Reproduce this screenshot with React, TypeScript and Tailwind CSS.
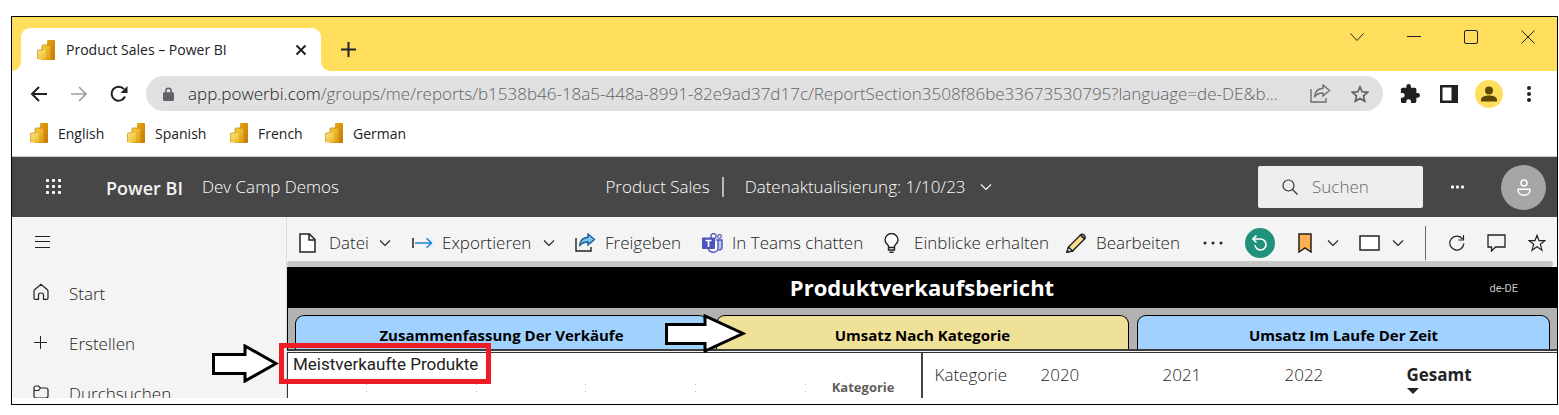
import type { ReactNode } from 'react';

const sans = "font-['Open_Sans','Noto_Sans',sans-serif]";

function PowerBiIcon() {
  return (
    <svg width="18" height="20" viewBox="0 0 18 20" className="shrink-0" aria-hidden="true">
      <defs>
        <linearGradient id="barBack" x1="0" y1="0" x2="1" y2="1">
          <stop offset="0" stopColor="#e8a812" />
          <stop offset="1" stopColor="#c87508" />
        </linearGradient>
        <linearGradient id="barMid" x1="0" y1="0" x2="1" y2="1">
          <stop offset="0" stopColor="#f5d040" />
          <stop offset="1" stopColor="#dc980e" />
        </linearGradient>
        <linearGradient id="barFront" x1="0" y1="0" x2="1" y2="1">
          <stop offset="0" stopColor="#fae580" />
          <stop offset="1" stopColor="#eab828" />
        </linearGradient>
      </defs>
      <rect x="10" y="0" width="8" height="20" rx="1" fill="url(#barBack)" />
      <path d="M5 6a1 1 0 0 1 1-1h7a1 1 0 0 1 1 1v14H5z" fill="url(#barMid)" stroke="#c8860c" strokeWidth=".8" />
      <path d="M.4 11a1 1 0 0 1 1-1H8a1 1 0 0 1 1 1v8.600H1.400a1 1 0 0 1-1-1z" fill="url(#barFront)" />
      <path d="M.4 19V11a1 1 0 0 1 1-1H5" fill="none" stroke="#d08c14" strokeWidth=".8" />
    </svg>
  );
}

function Line({ w, h, box, sw = 1, children, className = '' }: { w: number; h: number; box?: string; sw?: number; children: ReactNode; className?: string }) {
  return (
    <svg width={w} height={h} viewBox={box ?? `0 0 ${w} ${h}`} fill="none" stroke="currentColor" strokeWidth={sw} className={`shrink-0 ${className}`} aria-hidden="true">
      {children}
    </svg>
  );
}

function Chevron({ className = '' }: { className?: string }) {
  return (
    <Line w={12} h={8} sw={1.100} className={className}>
      <path d="M1 1.500l5 5 5-5" />
    </Line>
  );
}

function ShareIcon({ blue = false }: { blue?: boolean }) {
  return (
    <Line w={21} h={19} sw={1.4}>
      <path d="M1 5v13h15v-4" />
      <path
        d="M13 1l6.500 5.500L13 12V9C9 9 6.500 10 4.500 13 5 7.500 8 4.500 13 4.200z"
        fill={blue ? '#7cc0ee' : 'none'}
        stroke={blue ? '#1c5f94' : 'currentColor'}
      />
    </Line>
  );
}

function BrowserTabs() {
  return (
    <div className="flex h-[54px] items-end bg-[#ffde5e]">
      <svg width="9" height="9" viewBox="0 0 9 9" aria-hidden="true">
        <path d="M9 0v9H0A9 9 0 0 0 9 0z" fill="#fff" />
      </svg>
      <div className="flex h-[43px] w-[300px] items-center rounded-t-[9px] bg-white pl-4 pr-[14px]">
        <PowerBiIcon />
        <span className="ml-[11px] flex-1 whitespace-nowrap text-[14px] text-[#202124]">Product Sales – Power BI</span>
        <button aria-label="Close tab">
          <Line w={12} h={12} sw={2} className="text-[#202124]">
            <path d="M1.500 1.500l9 9M10.500 1.500l-9 9" />
          </Line>
        </button>
      </div>
      <svg width="9" height="9" viewBox="0 0 9 9" aria-hidden="true">
        <path d="M0 0v9h9A9 9 0 0 1 0 0z" fill="#fff" />
      </svg>
      <button aria-label="New tab" className="mb-[14px] ml-[11px] text-[#202124]">
        <Line w={15} h={15} sw={2}>
          <path d="M7.500 0v15M0 7.500h15" />
        </Line>
      </button>
      <div className="mb-[27px] ml-auto flex items-center gap-[43px] pr-[22px] text-[#202124]">
        <button aria-label="Search tabs">
          <Line w={14} h={14}>
            <path d="M.5 3.500L7 10.500l6.500-7" />
          </Line>
        </button>
        <button aria-label="Minimize">
          <Line w={14} h={14}>
            <path d="M0 6.500h14" />
          </Line>
        </button>
        <button aria-label="Maximize">
          <Line w={14} h={14}>
            <rect x=".5" y=".5" width="13" height="13" rx="1.500" />
          </Line>
        </button>
        <button aria-label="Close window">
          <Line w={14} h={14}>
            <path d="M.5.5l13 13M13.500.5l-13 13" />
          </Line>
        </button>
      </div>
    </div>
  );
}

function AddressBar() {
  return (
    <div className="flex h-[45px] items-center bg-white pl-[18px] pr-[26px] text-[#202124]">
      <button aria-label="Back" className="mr-6">
        <Line w={17} h={16} sw={2}>
          <path d="M17 8H1.500M9 1L2 8l7 7" />
        </Line>
      </button>
      <button aria-label="Forward" className="mr-[23px] text-[#9d9ea0]">
        <Line w={16} h={16} sw={1.600}>
          <path d="M0 8h15M8 1l7 7-7 7" />
        </Line>
      </button>
      <button aria-label="Reload" className="mr-[18px]">
        <Line w={18} h={18} sw={2}>
          <path d="M15 11.500A7 7 0 1 1 14 4.200" />
          <path d="M17.500 1v7h-7z" fill="currentColor" stroke="none" />
        </Line>
      </button>
      <form className="flex h-[35px] min-w-0 flex-1 items-center rounded-full bg-[#e0e0e0] pl-[17px] pr-[14px] text-[17px]">
        <svg width="11" height="14" viewBox="0 0 12 15" fill="#5f6368" className="mr-[14px] shrink-0" aria-hidden="true">
          <path fillRule="evenodd" d="M2.300 5.500V4a3.700 3.700 0 0 1 7.400 0v1.500h.8c.8 0 1.500.6 1.500 1.400v6.600c0 .8-.7 1.500-1.500 1.500h-9C.7 15 0 14.300 0 13.500V6.900c0-.8.7-1.400 1.500-1.400zM4 5.500h4V4a2 2 0 0 0-4 0z" />
        </svg>
        <label htmlFor="url" className="whitespace-nowrap font-[350]">app.powerbi.com</label>
        <input
          id="url"
          readOnly
          className="mr-2 min-w-0 flex-1 bg-transparent font-[350] text-[#5f6368] outline-none"
          value="/groups/me/reports/b1538b46-18a5-448a-8991-82e9ad37d17c/ReportSection3508f86be33673530795?language=de-DE&b..."
        />
        <button type="button" aria-label="Share" className="mr-5 text-[#6a6d70]">
          <ShareIcon />
        </button>
        <button type="button" aria-label="Bookmark this page" className="text-[#5f6368]">
          <Line w={18} h={18} sw={1.700}>
            <path d="M9 1.800l2.200 5 5.400.5-4.100 3.600 1.200 5.300L9 13.400l-4.700 2.800 1.200-5.300L1.400 7.300l5.400-.5z" />
          </Line>
        </button>
      </form>
      <button aria-label="Extensions" className="ml-[17px]">
        <svg width="20" height="20" viewBox="1 1 22 22" fill="currentColor">
          <path d="M20.500 11H19V7c0-1.100-.9-2-2-2h-4V3.500a2.500 2.500 0 0 0-5 0V5H4c-1.100 0-2 .9-2 2v3.800h1.500a2.700 2.700 0 0 1 0 5.400H2V20c0 1.100.9 2 2 2h3.800v-1.500a2.700 2.700 0 0 1 5.400 0V22H17c1.100 0 2-.9 2-2v-4h1.500a2.500 2.500 0 0 0 0-5z" />
        </svg>
      </button>
      <button aria-label="Side panel" className="ml-5">
        <svg width="18" height="18" viewBox="0 0 18 18" fill="currentColor">
          <path fillRule="evenodd" d="M0 0h18v18H0zM2.500 2.500v13h9v-13z" />
        </svg>
      </button>
      <button aria-label="Profile" className="ml-[17px]">
        <svg width="28" height="28" viewBox="0 0 28 28">
          <circle cx="14" cy="14" r="14" fill="#ffde5e" />
          <circle cx="14" cy="10.500" r="4" fill="#5c4700" />
          <path d="M6 21.500v-1.700c0-3 4.500-4.300 8-4.300s8 1.300 8 4.300v1.700z" fill="#5c4700" />
        </svg>
      </button>
      <button aria-label="Menu" className="ml-6">
        <svg width="4" height="18" viewBox="0 0 4 18" fill="currentColor">
          <circle cx="2" cy="3" r="2" />
          <circle cx="2" cy="9" r="2" />
          <circle cx="2" cy="15" r="2" />
        </svg>
      </button>
    </div>
  );
}

function Bookmark({ label, className }: { label: string; className: string }) {
  return (
    <a href="#" className={`flex items-center gap-[10px] ${className}`}>
      <PowerBiIcon />
      {label}
    </a>
  );
}

function AppHeader() {
  return (
    <header className="flex h-[60px] shrink-0 items-center bg-[#474747] pl-[34px] pr-[11px] text-[17px] text-white">
      <button aria-label="App launcher">
        <svg width="16" height="16" viewBox="0 0 16 16" fill="currentColor">
          {[0, 6, 12].map((y) => [0, 6, 12].map((x) => <rect key={`${x}-${y}`} x={x} y={y} width="3" height="3" rx="1" />))}
        </svg>
      </button>
      <span className="ml-11 w-24 whitespace-nowrap pt-[2px] text-[18px] font-semibold text-[#f3f2f1]">Power BI</span>
      <span className="whitespace-nowrap font-[350]">Dev Camp Demos</span>
      <div className="flex flex-1 items-center justify-center font-[350]">
        <span className="whitespace-nowrap">Product Sales</span>
        <span className="ml-3 mr-[21px] h-5 w-[2px] bg-[#b8b8b8]" />
        <button className="flex items-center gap-[14px] whitespace-nowrap">
          Datenaktualisierung: 1/10/23
          <Chevron />
        </button>
      </div>
      <label className="flex h-[42px] w-[165px] items-center rounded-[2px] bg-[#eeeeee] pl-6 text-[#333]">
        <Line w={16} h={16} sw={1.200}>
          <circle cx="6.500" cy="6.500" r="5.500" />
          <path d="M10.500 10.500l5 5" />
        </Line>
        <input type="search" placeholder="Suchen" aria-label="Suchen" className="ml-[14px] w-full min-w-0 bg-transparent font-[350] outline-none placeholder:text-[#666]" />
      </label>
      <button aria-label="Mehr" className="ml-7">
        <svg width="14" height="4" viewBox="0 0 14 4" fill="currentColor">
          <rect y=".5" width="3" height="3" rx="1" />
          <rect x="5" y=".5" width="3" height="3" rx="1" />
          <rect x="10" y=".5" width="3" height="3" rx="1" />
        </svg>
      </button>
      <button aria-label="Konto" className="ml-9 flex size-[45px] items-center justify-center rounded-full bg-[#a6a6a6]">
        <Line w={14} h={17} sw={1.500}>
          <circle cx="7" cy="4" r="3" />
          <path d="M1 10.200h12c0 3.600-2.200 6-6 6s-6-2.400-6-6z" />
        </Line>
      </button>
    </header>
  );
}

function NavItem({ label, children }: { label: string; children: ReactNode }) {
  return (
    <li>
      <a href="#" className="flex h-[50px] items-center">
        <span className="w-[36px] pb-1">{children}</span>
        {label}
      </a>
    </li>
  );
}

function Sidebar() {
  return (
    <nav className="w-[275px] shrink-0 overflow-hidden border-r border-[#dcdcdc] bg-[#f4f4f4] pl-[21px] text-[17px] font-[350] text-[#222]">
      <button aria-label="Navigation" className="flex h-[50px] items-center pl-[2px]">
        <Line w={15} h={12}>
          <path d="M0 .5h15M0 5.500h15M0 11.500h15" />
        </Line>
      </button>
      <ul className="pt-[2px]">
        <NavItem label="Start">
          <Line w={16} h={18} sw={1.200}>
            <path d="M1 8.200c0-.6.200-1 .6-1.400L8 1.200l6.400 5.600c.4.400.6.800.6 1.400V15c0 .8-.5 1.300-1.300 1.300H10.500v-4.500c0-1.200-.8-1.800-2.500-1.800s-2.500.6-2.500 1.800v4.500H2.300C1.500 16.300 1 15.800 1 15z" />
          </Line>
        </NavItem>
        <NavItem label="Erstellen">
          <Line w={15} h={15} sw={1}>
            <path d="M7.500 1v13M1 7.500h13" />
          </Line>
        </NavItem>
        <NavItem label="Durchsuchen">
          <Line w={16} h={14} sw={1.200}>
            <path d="M1 3c0-1.200.8-2 2-2h2.500L7.500 3H13c1.200 0 2 .8 2 2v6c0 1.200-.8 2-2 2H3c-1.200 0-2-.8-2-2zM1 5.500h4.500L7.500 3" />
          </Line>
        </NavItem>
      </ul>
    </nav>
  );
}

function Tool({ label, icon, width, menu }: { label: string; icon: ReactNode; width: string; menu?: boolean }) {
  return (
    <button className={`flex shrink-0 items-center whitespace-nowrap ${width}`}>
      <span className="flex w-[30px] shrink-0">{icon}</span>
      {label}
      {menu && <Chevron className="ml-auto" />}
    </button>
  );
}

function ReportToolbar() {
  return (
    <div className="flex h-11 shrink-0 items-center bg-[#f4f4f4] pl-3 pr-[11px] pt-[7px] text-[17px] font-[330] text-[#222]">
      <Tool
        label="Datei"
        width="w-[92px] mr-[21px]"
        menu
        icon={
          <Line w={17} h={20} sw={1.500}>
            <path d="M1 1h9.500L16 6.500V19H1zM10 1v6h6" fill="#fff" />
          </Line>
        }
      />
      <Tool
        label="Exportieren"
        width="w-[143px] mr-[20px]"
        menu
        icon={
          <Line w={21} h={12} sw={1.500}>
            <path d="M1 1v10" />
            <path d="M3 6h16M14.500 1.200L19.500 6l-5 4.800" stroke="#1a86d0" />
          </Line>
        }
      />
      <Tool label="Freigeben" width="w-[127px]" icon={<ShareIcon blue />} />
      <Tool
        label="In Teams chatten"
        width="w-[182px]"
        icon={
          <svg width="21" height="20" viewBox="0 0 21 20" aria-hidden="true">
            <circle cx="11.500" cy="3.200" r="2.600" fill="#fff" stroke="#4b53bc" strokeWidth="1.300" />
            <circle cx="17.500" cy="3.500" r="1.800" fill="#fff" stroke="#4b53bc" strokeWidth="1.200" />
            <path d="M14 7h6v7c0 1.800-1.600 3-3.500 3" fill="#c5c8ee" stroke="#4b53bc" strokeWidth="1.400" />
            <path d="M16 7v8c0 2.500-2 4.200-4.500 4.200S7 17.800 6.500 16" fill="#fff" stroke="#4b53bc" strokeWidth="1.400" />
            <rect y="4.500" width="13" height="11.500" rx="1" fill="#4b53bc" />
            <path d="M3.500 7.500h6M6.500 7.500V14" stroke="#fff" strokeWidth="1.700" />
          </svg>
        }
      />
      <Tool
        label="Einblicke erhalten"
        width="w-[182px]"
        icon={
          <Line w={15} h={20} sw={1.400}>
            <path d="M4.500 14.500v-1.700C3 11.500 1 10 1 7a6.500 6.500 0 0 1 13 0c0 3-2 4.500-3.500 5.800v1.700zM4.500 14.500v2.500h6v-2.500M5.500 19.200h4" fill="#fff" />
          </Line>
        }
      />
      <Tool
        label="Bearbeiten"
        width="w-[114px]"
        icon={
          <Line w={21} h={20} sw={1.400}>
            <path d="M1 19l1.500-5L14.500 2l4 4-12 12z" fill="#fbdc8e" />
            <path d="M14.500 2c2-2 6.500 1.500 4 4z" fill="#d58ad8" />
            <path d="M2.500 14l4 4L1 19z" fill="#fff" />
          </Line>
        }
      />
      <button aria-label="Weitere Optionen" className="ml-[23px]">
        <svg width="20" height="4" viewBox="0 0 20 4" fill="currentColor">
          <circle cx="2" cy="2" r="1.500" />
          <circle cx="10" cy="2" r="1.500" />
          <circle cx="18" cy="2" r="1.500" />
        </svg>
      </button>
      <button aria-label="Zurücksetzen" className="ml-[22px] flex size-[30px] shrink-0 items-center justify-center rounded-full bg-[#20917a] text-white">
        <Line w={16} h={16} sw={1.600}>
          <path d="M1 4h7.500a5.500 5.500 0 1 1-5.500 6M4.500.5L1 4l3.500 3.500" />
        </Line>
      </button>
      <button aria-label="Lesezeichen" className="ml-[23px] flex shrink-0 items-center gap-[15px]">
        <Line w={14} h={20} sw={1.500}>
          <path d="M1 1h12v18l-6-4-6 4z" fill="#ffb04f" />
        </Line>
        <Chevron />
      </button>
      <button aria-label="Ansicht" className="ml-5 flex shrink-0 items-center gap-3">
        <Line w={21} h={16} sw={1.500}>
          <rect x="1" y="1" width="19" height="14" fill="#fff" />
        </Line>
        <Chevron />
      </button>
      <span className="ml-auto h-[34px] w-px bg-[#666]" />
      <button aria-label="Aktualisieren" className="ml-[23px]">
        <Line w={16} h={16} sw={1.200}>
          <path d="M14.800 8.500A7 7 0 1 1 13.500 4M14.500 0v5h-5" />
        </Line>
      </button>
      <button aria-label="Kommentar" className="ml-[22px]">
        <Line w={19} h={18} sw={1.300}>
          <path d="M1 1h17v12H8.500L4.500 17v-4H1z" />
        </Line>
      </button>
      <button aria-label="Favorit" className="ml-[22px]">
        <Line w={18} h={18} sw={1.200}>
          <path d="M9 1.300l2 5.300h5.800l-4.500 3.700 1.700 5.900-5-3.500-5 3.500 1.700-5.900L1.200 6.600H7z" />
        </Line>
      </button>
    </div>
  );
}

function PageTab({ label, active }: { label: string; active?: boolean }) {
  return (
    <button
      className={`flex-1 rounded-t-[9px] border border-b-0 border-black pt-[6px] text-[15px] font-bold text-black ${active ? 'bg-[#f0e199]' : 'bg-[#a0d1ff]'}`}
    >
      {label}
    </button>
  );
}

function PointerArrow({ className, shaft, head }: { className: string; shaft: number; head: number }) {
  return (
    <svg width={shaft + head} height="39" viewBox={`0 0 ${shaft + head} 39`} className={`absolute ${className}`} aria-hidden="true">
      <path d={`M1.500 10.500h${shaft - 1.5}V2l${head - 3} 17.500-${head - 3} 17.500v-7.500H1.500z`} fill="#fff" stroke="#000" strokeWidth="3" />
    </svg>
  );
}

function Report() {
  return (
    <>
      <div className="grid h-[41px] shrink-0 grid-cols-[1fr_auto_1fr] items-center bg-black text-white">
        <h1 className="col-start-2 text-[22px] font-bold">Produktverkaufsbericht</h1>
        <span className="justify-self-end pr-[39px] pt-1 font-['Roboto',sans-serif] text-[11px] text-[#c8c8c8]">de-DE</span>
      </div>
      <div className="flex h-[43px] shrink-0 gap-2 border-b-2 border-l border-b-[#3c3c3c] border-l-black bg-[#b2b2b2] pl-[7px] pr-[7px] pt-[7px]">
        <PageTab label="Zusammenfassung Der Verkäufe" />
        <PageTab label="Umsatz Nach Kategorie" active />
        <PageTab label="Umsatz Im Laufe Der Zeit" />
      </div>
      <div className="mt-px flex min-h-0 flex-1 overflow-hidden border-l border-t border-[#333] bg-white">
        <section className="flex w-1/2 shrink-0 flex-col border-r-2 border-[#444]">
          <h2 className="pl-[5px] font-['Roboto',sans-serif] text-[17px] leading-[22px] text-[#222]">Meistverkaufte Produkte</h2>
          <div className="flex items-center pl-[78px] pr-[26px] pt-[3px]">
            <div className="flex flex-1 justify-between pr-[26px]">
              {[0, 1, 2, 3, 4].map((tick) => (
                <span key={tick} className="h-2 w-px border-y border-[#bbb]" />
              ))}
            </div>
            <span className="text-[13px] font-bold text-[#605e5c]">Kategorie</span>
          </div>
        </section>
        <table className="h-[46px] w-1/2 table-fixed text-left text-[17px] text-[#252423]">
          <thead>
            <tr className="align-top">
              <th className="w-[118px] pl-3 pt-[9px] font-[350]">Kategorie</th>
              <th className="w-[122px] pt-[9px] font-[350]">2020</th>
              <th className="w-[122px] pt-[9px] font-[350]">2021</th>
              <th className="w-[122px] pt-[9px] font-[350]">2022</th>
              <th className="pt-[9px] font-bold">
                Gesamt
                <svg width="12" height="6" viewBox="0 0 12 6" aria-hidden="true">
                  <path d="M0 0h12L6 6z" fill="#252423" />
                </svg>
              </th>
            </tr>
          </thead>
        </table>
      </div>
    </>
  );
}

export default function App() {
  return (
    <div className={`flex h-screen min-h-[415px] flex-col bg-white pb-[10px] pl-[11px] pr-px pt-4 ${sans}`}>
      <div className="flex min-h-0 flex-1 flex-col border border-black pb-[6px]">
        <BrowserTabs />
        <AddressBar />
        <div className="flex h-[41px] shrink-0 items-center border-b border-[#c8c8c8] bg-white pb-[6px] pl-[18px] text-[14px] text-[#202124]">
          <Bookmark label="English" className="w-[97px]" />
          <Bookmark label="Spanish" className="w-[103px]" />
          <Bookmark label="French" className="w-[95px]" />
          <Bookmark label="German" className="w-[95px]" />
        </div>
        <AppHeader />
        <div className="relative flex min-h-0 flex-1">
          <Sidebar />
          <main className="flex min-w-0 flex-1 flex-col overflow-hidden bg-[#f4f4f4]">
            <ReportToolbar />
            <div className="mr-1 h-[6px] shrink-0 rounded-full bg-[#c6c6c6]" />
            <Report />
          </main>
          <div className="absolute left-[267px] top-[126px] h-[41px] w-[212px] border-[5px] border-[#ee1c25]" />
          <PointerArrow className="left-[200px] top-[127px]" shaft={33} head={34} />
          <PointerArrow className="left-[653px] top-[97px]" shaft={40} head={41} />
        </div>
      </div>
    </div>
  );
}
